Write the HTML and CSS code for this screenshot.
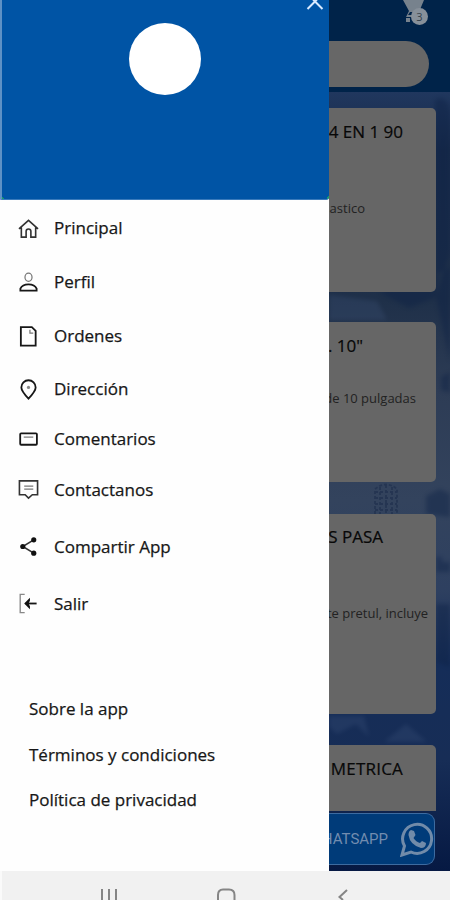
FILE: index.html
```
<!DOCTYPE html>
<html lang="es">
<head>
<meta charset="utf-8">
<title>Menú</title>
<link rel="stylesheet" href="styles.css">
</head>
<body>
<div class="phone">
  <div class="screen">
    <aside class="drawer">
      <header class="profile">
        <div class="avatar"></div>
        <svg class="close" width="18" height="12" viewBox="0 0 18 12"><path d="M3 -5L9 1.500L15 -5M1.500 9L9 1.500L16.500 9"/></svg>
      </header>
      <nav class="menu">
        <a class="item"><svg class="icon" viewBox="0 0 22 22"><path d="M1 11.500L11 2.500L21 11.500M3.500 10V20H8.500V14Q8.500 11.500 11 11.500T13.500 14V20H18.500V10"/></svg><span>Principal</span></a>
        <a class="item"><svg class="icon" viewBox="0 0 22 22"><ellipse class="light" cx="11" cy="5.500" rx="3.700" ry="4.200"/><path class="bold" d="M2.500 19.500V17.500Q4.500 13 11 13T19.500 17.500V19.500Z"/></svg><span>Perfil</span></a>
        <a class="item"><svg class="icon" viewBox="0 0 22 22"><path class="bold" d="M3 1.200H14.500L18.500 5V20.500H3Z"/><path class="light" d="M12.500 4V7.500H16"/></svg><span>Ordenes</span></a>
        <a class="item pin"><svg class="icon" viewBox="0 0 22 22"><path class="bold" d="M11 20.500Q3.500 12.500 3.500 8.800A7.500 7.500 0 0 1 18.500 8.800Q18.500 12.500 11 20.500Z"/><circle class="dot" cx="11" cy="8.800" r="1.700"/></svg><span>Dirección</span></a>
        <a class="item comments"><svg class="icon" viewBox="0 0 22 22"><rect class="bold" x="2.300" y="4.500" width="17.500" height="12" rx="1"/><path class="light" d="M6 8.500H16"/></svg><span>Comentarios</span></a>
        <a class="item contact"><svg class="icon" viewBox="0 0 22 22"><path d="M1.500 2H20.500V16.500H15L11 20L7.500 16.500H1.500Z"/><path class="light" d="M6.500 7.500H16M6.500 10.500H16"/></svg><span>Contactanos</span></a>
        <a class="item share"><svg class="icon" viewBox="0 0 22 22"><path d="M16.500 4L5 11L16.500 18"/><circle class="solid" cx="16.500" cy="4" r="2.700"/><circle class="solid" cx="5" cy="11" r="2.700"/><circle class="solid" cx="16.500" cy="18" r="2.700"/></svg><span>Compartir App</span></a>
        <a class="item exit"><svg class="icon" viewBox="0 0 22 22"><path class="gray" d="M7 1.500H2.300V20.500H7"/><path class="bold" d="M19.500 11H8"/><path class="solid" d="M6.500 11L12.500 5V8L11 11L12.500 14V17Z"/></svg><span>Salir</span></a>
      </nav>
      <nav class="links">
        <a>Sobre la app</a>
        <a>Términos y condiciones</a>
        <a>Política de privacidad</a>
      </nav>
    </aside>
    <main class="shop">
      <svg class="wallpaper" width="121" height="779" viewBox="0 0 121 779">
        <g class="shadow"><path d="M106 8Q123 0 121 35V160L107 205ZM50 200L80 216L107 205L121 270V175L90 190ZM121 280L112 285V298L121 301ZM97 422V404L111 397L121 402V425ZM107 512H121V575L107 570Z"/><path d="M107 465H113V470H121V480H107Z"/></g>
        <g class="glow"><path d="M0 624H35L40 645L27 632L8 642L0 635ZM55 650L77 632L98 650ZM0 203L48 209L58 228H0Z"/></g>
        <path class="windows" d="M46 422V397Q57 388 68 397V422M51 395V422M57 393V422M63 395V422M46 400H68M46 406H68M46 412H68M46 418H68"/>
      </svg>
      <header class="top">
        <div class="cart">
          <svg width="30" height="27" viewBox="0 0 30 27"><path d="M3 0H24L19 12H10L8 15H22V17H6L9 11ZM6 18H10V22H6Z"/></svg>
          <span class="badge">3</span>
        </div>
        <div class="search"></div>
      </header>
      <section class="cards">
        <article class="card one"><h2>4 EN 1 90</h2><p>astico</p></article>
        <article class="card two"><h2>. 10"</h2><p>de 10 pulgadas</p></article>
        <article class="card three"><h2>S PASA</h2><p>te pretul, incluye</p></article>
        <article class="card four"><h2>METRICA</h2></article>
      </section>
      <div class="whatsapp">
        <span>WHATSAPP</span>
        <svg width="34" height="36" viewBox="0 0 34 36"><path class="bubble" d="M2 34L4.500 25A14.500 14.500 0 1 1 11 31Z"/><path class="handset" d="M11 9L14 10L15.500 14L13.500 17Q16 21 20 22L22 20L26 22Q26 27 21 27Q10 24 8.500 14Q8.500 10 11 9Z"/></svg>
      </div>
    </main>
  </div>
  <footer class="system">
    <svg width="450" height="29" viewBox="0 0 450 29"><path d="M102 18V29M109 18V29M116 18V29M218 29V24Q218 18.500 223 18.500H229Q234.500 18.500 234.500 24V29M347 19L339.500 26L343 29"/></svg>
  </footer>
</div>
</body>
</html>
```
FILE: styles.css
```
* { box-sizing: border-box; }
body { margin: 0; font-family: "Open Sans", "Noto Sans", sans-serif; color: #171717; }
.phone { width: 450px; height: 900px; overflow: hidden; background: #fefefe; }
.screen { display: flex; height: 871px; }
.drawer { width: 329px; flex: none; background: #fefefe; -webkit-text-stroke: .25px #171717; }
.profile { position: relative; height: 200px; padding-top: 23px; background: linear-gradient(135deg, transparent 75%, #16a06d 75%) bottom right / 6px 6px no-repeat, linear-gradient(225deg, transparent 75%, #16a06d 75%) bottom left / 5px 5px no-repeat, #0054a5; border-left: 2px solid #5e91c5; border-bottom: 1px solid #397abb; border-radius: 0 0 3px 0; }
.avatar { width: 72px; height: 72px; margin-left: 127px; border-radius: 50%; background: #fff; }
.close { position: absolute; top: 0; right: 5px; fill: none; stroke: #d9eaff; stroke-width: 2; }
.menu { padding-top: 1px; }
.item { display: flex; align-items: center; gap: 15px; height: 54px; padding-left: 18px; font-size: 17px; line-height: 24px; }
.pin { height: 52px; }
.comments { height: 48px; }
.contact { height: 53px; }
.share { height: 61px; }
.exit { height: 53px; }
.icon { width: 21px; height: 21px; flex: none; fill: none; stroke: #333; stroke-width: 1.7; }
.icon .bold { stroke: #171717; stroke-width: 1.9; }
.icon .light { stroke: #777; stroke-width: 1.3; }
.icon .gray { stroke: #888; stroke-width: 1.4; }
.icon .solid { fill: #111; stroke: none; }
.icon .dot { fill: #888; stroke: none; }
.links { display: flex; flex-direction: column; gap: 21.6px; padding: 67px 0 0 29px; font-size: 17px; line-height: 24px; }

.shop { position: relative; width: 121px; overflow: hidden; background: linear-gradient(#20375e 92px, #182b4a 150px, #1f3049 300px, #2d3c55 390px, #33435d 500px, #2e4060 590px, #152d58 665px, #172d56 760px, #061943 871px); }
.wallpaper { position: absolute; top: 92px; left: 0; }
.shadow { fill: #0d2145; opacity: .42; filter: blur(2px); }
.glow { fill: #465c84; opacity: .24; filter: blur(2px); }
.windows { fill: none; stroke: #1d2d4b; stroke-width: 1.8; stroke-dasharray: 3 2; opacity: .6; }
.top { position: relative; height: 92px; background: #002349; }
.cart { display: flex; height: 41px; padding-left: 71px; }
.cart svg { fill: #77828d; }
.badge { position: absolute; top: 8px; left: 82px; width: 17px; height: 17px; border-radius: 50%; background: #87909a; color: #34404b; font-size: 11px; line-height: 17px; text-align: center; }
.search { width: 100px; height: 46px; border-radius: 0 23px 23px 0; background: #676767; }
.cards { position: relative; display: flex; flex-direction: column; width: 107px; padding-top: 16px; }
.card { display: flex; flex-direction: column; align-items: flex-end; background: #666; border-radius: 0 5px 5px 0; white-space: nowrap; overflow: hidden; }
.card h2 { margin: 0; font-size: 17px; line-height: 24px; font-weight: 400; color: #080808; -webkit-text-stroke: .2px #080808; }
.card p { margin: 0; font-size: 13px; line-height: 18px; color: #222; }
.one { height: 184px; padding-top: 12px; margin-bottom: 30px; }
.one h2 { margin-right: 33px; }
.one p { margin: 55px 71px 0 0; }
.two { height: 160px; padding-top: 12px; margin-bottom: 32px; }
.two h2 { margin-right: 73px; }
.two p { margin: 31px 20px 0 0; }
.three { height: 200px; padding-top: 11px; margin-bottom: 31px; }
.three h2 { margin-right: 53px; }
.three p { margin: 55px 8px 0 0; }
.four { height: 66px; padding-top: 12px; border-radius: 0 5px 0 0; }
.four h2 { margin-right: 33px; letter-spacing: .2px; }
.whatsapp { position: relative; display: flex; align-items: center; justify-content: flex-end; gap: 12px; width: 106px; height: 52px; margin-top: 2px; background: #003b79; border: 1px solid #3d6ba0; border-left: 0; border-radius: 0 9px 9px 0; color: #728caf; font-family: Roboto, sans-serif; font-size: 15px; }
.whatsapp svg { flex: none; }
.bubble { fill: none; stroke: #718ba9; stroke-width: 3; }
.handset { fill: #718ba9; }
.system { height: 29px; background: #f1f1f1; border-left: 2px solid #fafafa; }
.system svg { display: block; margin-left: -2px; fill: none; stroke: #858585; stroke-width: 2; }
```
